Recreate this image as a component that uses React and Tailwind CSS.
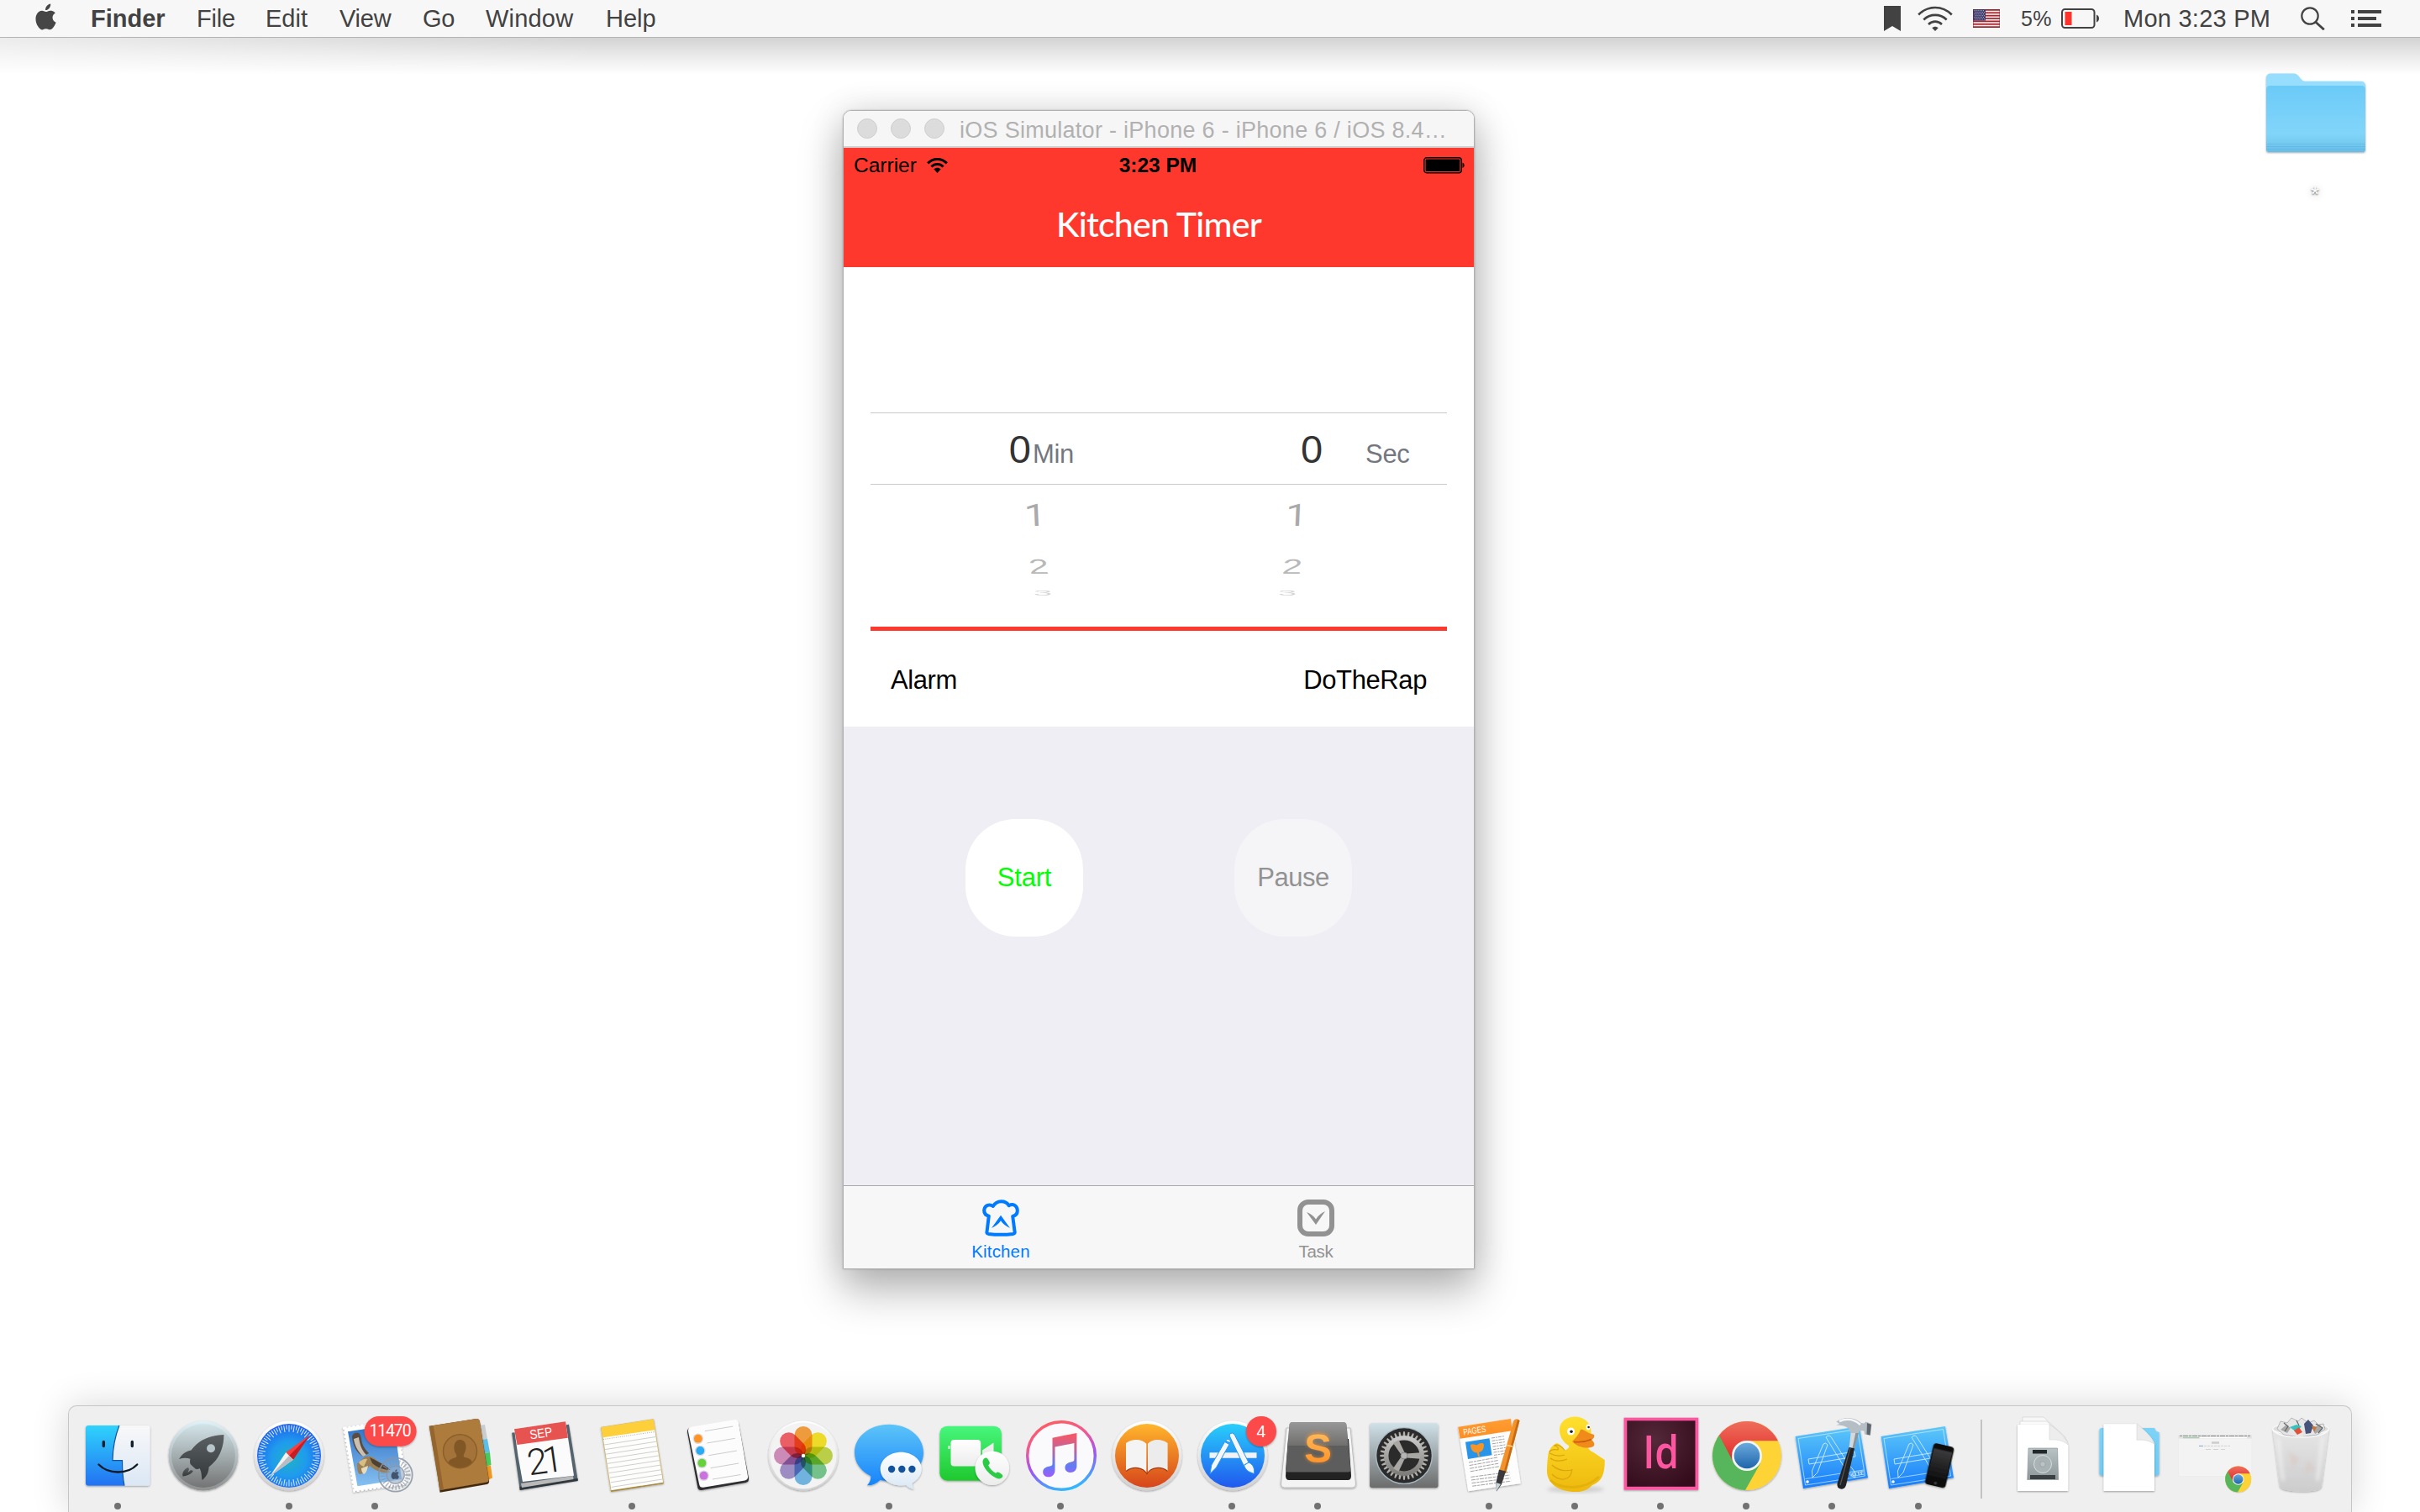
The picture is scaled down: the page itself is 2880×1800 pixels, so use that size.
import React from "react";

const SANS = "font-['Liberation_Sans',Arial,sans-serif]";

/* ---------- Menu bar ---------- */

function AppleLogo() {
  return (
    <svg className="h-[32px] w-[26px]" viewBox="0 0 26 32" fill="#464646">
      <path d="M18.2 0.6c.2 2.100-.6 4-1.700 5.300-1.200 1.400-2.900 2.300-4.500 2.100-.2-2 .7-3.900 1.800-5.100C15 1.600 16.800.7 18.200.6z" />
      <path d="M23.800 11.400c-2 1.200-3.300 3-3.300 5.400 0 2.800 1.700 5 4.100 5.900-.6 1.800-1.400 3.400-2.500 5-1.300 1.900-2.700 3.600-4.700 3.600-1.900 0-2.500-1.100-4.700-1.100s-2.900 1.100-4.700 1.200c-1.900.1-3.400-1.900-4.700-3.800C.6 23.900-.8 17.100 2 12.500c1.300-2.200 3.600-3.600 6-3.700 1.900 0 3.600 1.300 4.800 1.300 1.100 0 3.200-1.600 5.500-1.300 1 0 3.800.4 5.500 2.600z" />
    </svg>
  );
}

function Wifi({ className, stroke, color }) {
  return (
    <svg className={className} viewBox="0 0 42 30" fill="none" stroke={color} strokeWidth={stroke}>
      <path d="M1.200 10.500C12.500-.8 29.500-.8 40.800 10.500" />
      <path d="M7.300 16.500C15 9 27 9 34.700 16.500" />
      <path d="M13 22c4.800-4.500 11.200-4.500 16 0" />
      <path d="M17.300 26.300c2.200-2 5.200-2 7.400 0L21 30z" fill={color} stroke="none" />
    </svg>
  );
}

function StatusWifi() {
  return (
    <svg className="ml-[12px] h-[18px] w-[25px]" viewBox="0 0 25 18" fill="none" stroke="#000" strokeWidth="3">
      <path d="M1.200 6.300C7.700 0 17.300 0 23.800 6.300" />
      <path d="M5.400 10.500c4-3.900 10.200-3.900 14.200 0" />
      <path d="M8.300 13.300c2.400-2.200 6-2.200 8.400 0L12.500 18z" fill="#000" stroke="none" />
    </svg>
  );
}

function Flag() {
  return (
    <svg className="h-[22px] w-[32px]" viewBox="0 0 32 22">
      <rect width="32" height="22" fill="#f4f1f1" />
      {[0, 1, 2, 3, 4, 5, 6].map((i) => (
        <rect key={i} x="0" y={i * 3.38} width="32" height="1.750" fill="#a8232b" />
      ))}
      <rect width="15" height="13.600" fill="#3d3b6c" />
      {[0, 1, 2, 3, 4, 5].map((r) =>
        [0, 1, 2, 3, 4, 5].map((c) => (
          <rect key={r + "-" + c} x={1.500 + c * 2.100 + (r % 2)} y={1.300 + r * 2} width="0.900" height="0.900" fill="#dcdce8" />
        ))
      )}
      <rect x=".5" y=".5" width="31" height="21" fill="none" stroke="#7a2028" strokeOpacity=".45" />
    </svg>
  );
}

const MENUS = [
  ["Finder", "w-[126px] font-bold"],
  ["File", "w-[82px] tracking-[-0.2px]"],
  ["Edit", "w-[88px]"],
  ["View", "w-[99px] tracking-[-0.2px]"],
  ["Go", "w-[75px] tracking-[-0.4px]"],
  ["Window", "w-[143px] tracking-[0.2px]"],
  ["Help", "w-[80px]"],
];

function MenuBar() {
  return (
    <header className="relative z-10 flex h-[45px] w-full shrink-0 items-center border-b border-[#b4b4b4] bg-[#f7f7f7] text-[29px] leading-[44px] text-[#424242]">
      <div className="flex h-full w-[108px] items-center pl-[42px] pb-[5px]">
        <AppleLogo />
      </div>
      {MENUS.map(([label, cls]) => (
        <span key={label} className={cls}>{label}</span>
      ))}
      <div className="ml-auto flex h-full items-center pr-[46px]">
        <svg className="h-[30px] w-[20px]" viewBox="0 0 20 30" fill="#424242">
          <path d="M0 0h20v30l-10-6-10 6z" />
        </svg>
        <Wifi className="ml-[20px] h-[30px] w-[42px]" stroke="2.600" color="#424242" />
        <div className="ml-[24px]"><Flag /></div>
        <span className="ml-[25px] w-[48px] text-[25px] tracking-[0.4px]">5%</span>
        <svg className="h-[24px] w-[46px]" viewBox="0 0 46 24">
          <rect x="1" y="1" width="38.500" height="22" rx="3.500" fill="none" stroke="#424242" strokeWidth="2" />
          <rect x="4.500" y="4" width="8" height="16" fill="#ff322c" />
          <path d="M42 7.500c4 1.500 4 7.500 0 9z" fill="#424242" />
        </svg>
        <span className="ml-[28px] w-[211px] tracking-[0.25px]">Mon 3:23 PM</span>
        <svg className="h-[28px] w-[29px]" viewBox="0 0 29 28" fill="none" stroke="#424242">
          <circle cx="11" cy="11" r="9.700" strokeWidth="2.200" />
          <path d="M17.800 18.300l10 9" strokeWidth="2.800" />
        </svg>
        <svg className="ml-[31px] h-[20px] w-[36px]" viewBox="0 0 36 20" fill="#424242">
          <path d="M0 0h4v4H0zM0 8h4v4H0zM0 16h4v4H0zM8 0h28v4H8zM8 8h22v4H8zM8 16h28v4H8z" />
        </svg>
      </div>
    </header>
  );
}

/* ---------- Desktop folder ---------- */

function DesktopFolder() {
  return (
    <div className="absolute left-[2690px] top-[39px] flex w-[132px] flex-col items-center">
      <svg className="h-[102px] w-[132px]" viewBox="0 0 132 102">
        <defs>
          <linearGradient id="fold" x1="0" y1="0" x2="0" y2="1">
            <stop offset="0" stopColor="#6bcaf7" />
            <stop offset=".72" stopColor="#81d5fa" />
            <stop offset=".86" stopColor="#76cbf1" />
            <stop offset="1" stopColor="#66bde8" />
          </linearGradient>
          <filter id="fsh" x="-10%" y="-10%" width="120%" height="125%">
            <feDropShadow dx="0" dy="1" stdDeviation="1" floodOpacity=".35" />
          </filter>
        </defs>
        <g filter="url(#fsh)">
          <path d="M7 9q0-5.500 5.500-5.500h28q2.500 0 4.500 2.500l4 5q2 1.800 4 1.800h66.500q5.500 0 5.500 5.500v75.700q0 3-3 3H10q-3 0-3-3z" fill="#97ddfd" />
          <path d="M7 23q0-5 5-5h108q5 0 5 5v71q0 3-3 3H10q-3 0-3-3z" fill="url(#fold)" />
        </g>
        <path d="M7 87.500h118M7 90.500h118M7 93.500h118" stroke="#5ab2de" strokeOpacity=".55" strokeWidth="1" />
      </svg>
      <span className="mr-[2px] mt-[30px] text-[26px] leading-[30px] text-white [text-shadow:0_1px_2px_rgba(0,0,0,0.65),0_2px_10px_rgba(0,0,0,0.25)]">*</span>
    </div>
  );
}

/* ---------- Simulator window ---------- */

function WheelRow({ digit, rowClass, leftPad, rightPad, textClass, leftSkew, rightSkew }) {
  return (
    <div className={"flex items-center " + rowClass}>
      <div className={"w-[360px] " + leftPad}>
        <span className={"block w-[60px] text-center text-[46px] leading-none " + textClass + " " + leftSkew}>{digit}</span>
      </div>
      <div className={rightPad}>
        <span className={"block w-[60px] text-center text-[46px] leading-none " + textClass + " " + rightSkew}>{digit}</span>
      </div>
    </div>
  );
}

function Picker() {
  return (
    <section className="flex h-[547px] flex-col bg-white">
      <div className="mx-[32px] mt-[173px] h-px bg-[#c9c9c9]" />
      <div className="flex h-[84px] items-center">
        <span className="w-[223px] pt-[2px] text-right text-[47px] leading-[46px] text-[#333]">0</span>
        <span className="w-[321px] pl-[2px] pt-[13px] text-[31px] leading-[34px] tracking-[-0.3px] text-[#757780]">Min</span>
        <span className="w-[77px] pt-[2px] text-[47px] leading-[46px] text-[#333]">0</span>
        <span className="pt-[13px] text-[31px] leading-[34px] tracking-[-0.3px] text-[#757780]">Sec</span>
      </div>
      <div className="mx-[32px] h-px bg-[#c9c9c9]" />
      <WheelRow
        digit="1"
        rowClass="h-[72px]"
        leftPad="pl-[198px]"
        rightPad="pl-[149px]"
        textClass="scale-y-[0.8] text-[#aaa] font-['Roboto',sans-serif]"
        leftSkew="skew-x-[2deg]"
        rightSkew="skew-x-[-2deg]"
      />
      <WheelRow
        digit="2"
        rowClass="h-[49px]"
        leftPad="pl-[202px]"
        rightPad="pl-[144px]"
        textClass="scale-y-[0.54] scale-x-[0.93] text-[#b9b9b9]"
        leftSkew="skew-x-[4deg]"
        rightSkew="skew-x-[-4deg]"
      />
      <WheelRow
        digit="3"
        rowClass="h-[16px]"
        leftPad="pl-[207px]"
        rightPad="pl-[138px]"
        textClass="scale-y-[0.19] scale-x-[0.88] text-[#d6d6d6]"
        leftSkew=""
        rightSkew=""
      />
      <div className="mx-[32px] mt-[32px] h-[5px] bg-[#ff382d]" />
      <div className="flex flex-1 items-center justify-between pl-[56px] pr-[56px] pt-[5px] text-[31px] tracking-[-0.4px] text-black">
        <span>Alarm</span>
        <span>DoTheRap</span>
      </div>
    </section>
  );
}

function TabBar() {
  return (
    <footer className="grid h-[99px] grid-cols-2 border-t border-[#a9a9ab] bg-[#f7f7f7] text-[20.5px] leading-[22px]">
      <div className="flex flex-col items-center pr-[1px] pt-[16px] text-[#007aff]">
        <svg className="h-[44px] w-[44px]" viewBox="0 0 44 44" fill="none">
          <path
            d="M5.500 38.500q-.5 2 1.800 2.400 14.500 1.800 29.500 0 2.200-.4 1.800-2.400L36.200 20c4-1 6-4 5.500-8-.6-5-5.200-7.500-10-4.800C29.500 3.500 26.500 2.300 22.500 2.300S15 4.500 12.800 8C8.500 4.800 3.200 7 2.300 12c-.5 4 1.500 6.600 5.500 7.600z"
            stroke="#007aff"
            strokeWidth="4"
            strokeLinejoin="round"
          />
          <path d="M22 18.800l11 15.200c-4.500-1.800-8.500-5-11-8.700-2.500 3.700-6.500 6.900-11 8.700z" fill="#007aff" />
        </svg>
        <span className="mt-[7px] tracking-[0.15px]">Kitchen</span>
      </div>
      <div className="flex flex-col items-center pr-[1px] pt-[16px] text-[#929292]">
        <svg className="h-[44px] w-[44px]" viewBox="0 0 44 44" fill="none">
          <rect x="3" y="3" width="38" height="38" rx="10" stroke="#929292" strokeWidth="6" />
          <path d="M22 30L11 15c4.500 1.800 8.500 4.800 11 8.500C24.500 19.500 28.500 16 33 14z" fill="#929292" />
        </svg>
        <span className="mt-[7px] tracking-[-0.3px]">Task</span>
      </div>
    </footer>
  );
}

function SimulatorWindow() {
  return (
    <div className="absolute left-[1003px] top-[86px] flex w-[752px] flex-col rounded-t-[10px] border border-[#b0b0b0] shadow-[0_0_2px_rgba(0,0,0,0.25),0_0_40px_rgba(0,0,0,0.10),0_24px_50px_2px_rgba(0,0,0,0.28)]">
      <div className="flex h-[44px] items-center rounded-t-[9px] border-b-2 border-[#d2cfcf] bg-[#f6f6f6] pl-[16px]">
        <div className="flex gap-[16px]">
          <i className="size-[24px] rounded-full border border-[#cfcfcf] bg-[#dcdcdc]" />
          <i className="size-[24px] rounded-full border border-[#cfcfcf] bg-[#dcdcdc]" />
          <i className="size-[24px] rounded-full border border-[#cfcfcf] bg-[#dcdcdc]" />
        </div>
        <span className="ml-[18px] whitespace-nowrap pt-[3px] text-[27px] leading-[30px] tracking-[0.28px] text-[#b1b1b1]">
          iOS Simulator - iPhone 6 - iPhone 6 / iOS 8.4…
        </span>
      </div>
      <div className="h-[142px] bg-[#ff382d]">
        <div className="grid h-[42px] grid-cols-3 items-center pl-[12px] pr-[11px] text-[24.5px] leading-[42px] text-black">
          <div className="flex items-center">
            <span>Carrier</span>
            <StatusWifi />
          </div>
          <span className="pr-[3px] text-center font-bold">3:23 PM</span>
          <svg className="h-[20px] w-[49px] justify-self-end" viewBox="0 0 49 20">
            <rect x=".8" y=".8" width="44.400" height="17.900" rx="3" fill="none" stroke="#000" strokeWidth="1.400" />
            <rect x="2.600" y="2.600" width="40.800" height="14.300" rx="1" fill="#000" />
            <path d="M46.500 6.500q2.200 1 2.200 3.300t-2.200 3.300z" fill="#000" />
          </svg>
        </div>
        <h1 className="pt-[22px] text-center font-['Lato',sans-serif] text-[41px] font-medium leading-[54px] tracking-[-0.7px] text-white">Kitchen Timer</h1>
      </div>
      <Picker />
      <div className="flex h-[546px] gap-[180px] bg-[#efeef4] pl-[145px] pt-[110px] text-[31px] tracking-[-0.2px]">
        <button className="h-[140px] w-[140px] rounded-[60px] bg-white text-[#00ff00]">Start</button>
        <button className="h-[140px] w-[140px] rounded-[60px] bg-[#f5f5f7] tracking-[-0.5px] text-[#929292]">Pause</button>
      </div>
      <TabBar />
    </div>
  );
}

/* ---------- Dock icons, drawn round (0,0) ---------- */

function DockDefs() {
  const grads = [
    ["gFinder", "#2fd3fc", "#2272f2"],
    ["gFinderR", "#f8f8f9", "#dbe7f5"],
    ["gRocket", "#d3e5ea", "#747474"],
    ["gRim", "#dff2f8", "#8d8f90"],
    ["gDark", "#5b6063", "#34383b"],
    ["gWhite", "#fff", "#cfcfcf"],
    ["gSky", "#2e70c4", "#86c1f2"],
    ["gMsg", "#5cc4f8", "#1884fb"],
    ["gMsgS", "#fff", "#d9e8f5"],
    ["gGreen", "#47f67c", "#1fc82e"],
    ["gBook", "#ffb62c", "#d6441a"],
    ["gStore", "#29cffb", "#2058ee"],
    ["gPref", "#cfe1e8", "#6b6b6b"],
    ["gMetal", "#c8c8c8", "#7f7d7a"],
    ["gPages", "#ff9d33", "#fd8e23"],
    ["gDuck", "#ffe02e", "#eeb90c"],
    ["gXcode", "#5cc8f9", "#187cfa"],
    ["gDrive", "#b9c2c4", "#8d9799"],
    ["gFolder", "#7cd3f8", "#71caf2"],
    ["gTrash", "#e9e9ea", "#cdcdce"],
    ["gPhone", "#3a3a3c", "#0c0c0c"],
    ["gPaper", "#fff", "#ececec"],
    ["gOrangeS", "#ffc266", "#ff8a1d"],
    ["gBlueC", "#6aa9dc", "#1e66ab"],
    ["gChromeR", "#ef6d5c", "#df2725"],
  ];
  return (
    <svg className="absolute size-0">
      <defs>
        {grads.map(([id, a, b]) => (
          <linearGradient key={id} id={id} x1="0" y1="0" x2="0" y2="1">
            <stop offset="0" stopColor={a} />
            <stop offset="1" stopColor={b} />
          </linearGradient>
        ))}
        <linearGradient id="gTunes" x1=".3" y1="0" x2=".6" y2="1">
          <stop offset="0" stopColor="#ff5b62" />
          <stop offset=".3" stopColor="#ef5a94" />
          <stop offset=".6" stopColor="#a052f5" />
          <stop offset="1" stopColor="#2fb9fd" />
        </linearGradient>
        <linearGradient id="gNoteD" gradientUnits="userSpaceOnUse" x1="0" y1="-27" x2="0" y2="25">
          <stop offset="0" stopColor="#ff5560" />
          <stop offset=".4" stopColor="#b9679f" />
          <stop offset=".75" stopColor="#5f7df5" />
          <stop offset="1" stopColor="#a05bfb" />
        </linearGradient>
        <radialGradient id="gSafari" cx=".5" cy=".55" r=".55">
          <stop offset="0" stopColor="#1fb2c4" />
          <stop offset=".5" stopColor="#1f9bee" />
          <stop offset="1" stopColor="#1f62ec" />
        </radialGradient>
        <radialGradient id="gId" cx=".4" cy=".3" r=".8">
          <stop offset="0" stopColor="#54293a" />
          <stop offset="1" stopColor="#330b1a" />
        </radialGradient>
        <filter id="sh" x="-20%" y="-20%" width="140%" height="140%">
          <feDropShadow dx="0" dy="1" stdDeviation="1" floodOpacity=".35" />
        </filter>
        <filter id="soft" x="-20%" y="-20%" width="140%" height="140%">
          <feGaussianBlur stdDeviation="2.200" />
        </filter>
      </defs>
    </svg>
  );
}

const Finder = () => (
  <g>
    <g filter="url(#sh)">
      <rect x="-38" y="-36" width="76.500" height="71.700" rx="3" fill="url(#gFinderR)" />
    </g>
    <path d="M-35-36H1.900C-3.500-22-5.800-10-6 5.700H5.500C5.500 16 6 26 8 35.700H-35q-3 0-3-3V-33q0-3 3-3z" fill="url(#gFinder)" />
    <path d="M1.900-36C-3.500-22-5.800-10-6 5.700H5.500C5.500 16 6 26 8 35.700" fill="none" stroke="#14539c" strokeWidth="1.200" />
    <path d="M-16.700-16.500v5M17.300-16.500v5" stroke="#12212f" strokeWidth="3.400" strokeLinecap="round" />
    <path d="M-22.500 10.500C-11 22.500 12 22.500 23.200 10.500" fill="none" stroke="#101a24" strokeWidth="2.400" strokeLinecap="round" />
  </g>
);

const Launchpad = () => (
  <g>
    <circle r="41.500" fill="url(#gRim)" filter="url(#sh)" />
    <circle r="38" fill="url(#gRocket)" />
    <path
      d="M24.400-25C10-24-4-21-14.500-6.500-20.500-6-26-1-29 4c5-1.500 9.500-1.500 13.400-.3-.6 3-.4 5.500.6 6.800l5.500 5c2 .8 3.500.7 5-.5C-1.700 19.500-2.500 24-1.300 29 3.500 25 6.500 20 6.500 13.500 19 4 24.500-10 24.400-25z"
      fill="url(#gDark)"
    />
    <circle cx="9" cy="-8.700" r="5" fill="#b7c5ca" />
    <path d="M-18 14c-5 2-7.500 6-6.500 10.500 5.500-.5 10-2.500 12.500-6.500l-3-1-3.500 3 1.500-4z" fill="url(#gDark)" />
  </g>
);

const Safari = () => (
  <g>
    <circle r="41.500" fill="url(#gWhite)" filter="url(#sh)" />
    <circle r="38" fill="url(#gSafari)" />
    {Array.from({ length: 72 }, (_, i) => (
      <path key={i} d={i % 2 ? "M0-36.500v5" : "M0-36.500v8"} stroke="#dcecff" strokeWidth="1" transform={`rotate(${i * 5})`} />
    ))}
    <path d="M24.900-24.700L-3.800-4 4.900 4.700z" fill="#fb3f3c" />
    <path d="M24.900-24.700L0 0l4.900 4.700z" fill="#c71d24" />
    <path d="M-23 24.700L-3.800-4 4.900 4.700z" fill="#f2f2f2" />
    <path d="M-23 24.700L0 0l4.900 4.700z" fill="#b9bdc2" />
  </g>
);

const Mail = () => (
  <g>
    <path d="M-36.500-32.700L26-42 37 33-24.200 42z" fill="#fff" stroke="#fff" strokeWidth="3" strokeDasharray="3 2" filter="url(#sh)" />
    <path d="M-32-28.700L23-37 32 28-20.600 36.300z" fill="url(#gSky)" />
    <path d="M-27-22c0-4 4-6 8-5 3 3 3 8 4 12 1 4 5 9 8 12l-7 4c-8-5-12-13-13-23z" fill="#5a4c3e" />
    <path d="M-25-20c1 8 5 15 11 21l4-2c-6-6-8-13-9-21z" fill="#cabfb0" />
    <path d="M-21 9c4-1 6-7 11-8 6-1 9 1 13 5 6 3 12 7 15 14-8 1-18-2-24-8-4 5-8 10-12 10-3-2-3-8-3-13z" fill="#9c8055" />
    <path d="M-6 2c8 4 17 8 25 15-7 0-15-2-22-8z" fill="#4e4134" />
    <path d="M-19 8c3-3 7-5 10-4l-4 9c-3-1-5-3-6-5z" fill="#d8bd84" />
    <path d="M-16 15l8-3c-1 6-3 9-5 10-2-2-3-4-3-7z" fill="#e8dcc0" />
    <g fill="none" stroke="#8a94a3" strokeOpacity=".85">
      <circle cx="24.700" cy="22.700" r="20" strokeWidth="1.800" />
      <circle cx="24.700" cy="22.700" r="15" strokeWidth="6" strokeDasharray="1.500 2.200" strokeOpacity=".65" />
      <circle cx="24.700" cy="22.700" r="10.500" strokeWidth="1.500" />
    </g>
    <circle cx="24.700" cy="22.700" r="10" fill="#8fa6c2" fillOpacity=".6" />
    <g transform="translate(19.700 16) scale(.38)" fill="#42536b">
      <path d="M18.200.6c.2 2.100-.6 4-1.700 5.300-1.200 1.400-2.900 2.300-4.500 2.100-.2-2 .7-3.900 1.800-5.100C15 1.600 16.800.7 18.200.6z" />
      <path d="M23.800 11.400c-2 1.200-3.300 3-3.300 5.400 0 2.800 1.700 5 4.100 5.900-2 6-4.500 8.600-7.200 8.600-1.900 0-2.500-1.100-4.700-1.100s-2.900 1.100-4.700 1.200C-1 31-2 19 2 12.500c3-5 7-4 10.800-2.400 3-1.600 8-2.400 11 1.300z" />
    </g>
    <rect x="-12.400" y="-47" width="62" height="35.700" rx="17.800" fill="#fc4a48" filter="url(#sh)" />
    <text x="18.600" y="-22.600" textAnchor="middle" fontFamily="Roboto, sans-serif" fontSize="19.500" textLength="50" fill="#fff">11470</text>
  </g>
);

const Contacts = () => (
  <g>
    <path d="M22-36l7-1 3 17-8 1z" fill="#c9cdd0" />
    <path d="M24-19l8-1 3 16-9 1z" fill="#5bbfe6" />
    <path d="M27-3l8-1 1.500 15-7 2z" fill="#49c95b" />
    <path d="M29 13l7-1.500 2 15-7 3z" fill="#f0981f" />
    <path d="M-35-35.500L19-44q3-.3 3.800 2.500L34 30q.3 3-2.500 4L-24.400 43.700z" fill="#4c3114" />
    <path d="M-37.300-35.300L19-44q3-.3 3.800 2.500L33.500 28q.3 3-2.500 3.500L-24.400 41z" fill="#ad7b3e" filter="url(#sh)" />
    <path d="M-37.300-35.300l5-.8L-20 40.300l-4.400.9z" fill="#94652e" />
    <circle cx="-.5" cy="-5.300" r="20" fill="#a4733a" stroke="#8b5f2a" strokeWidth="1.500" />
    <path d="M-14.500 8.500c1-4.500 5-5 9-6.500 1-.6 1.200-2 .5-3.500-2-3-3-6-2.500-10 .5-5 3.500-7.500 7-7.500s6.500 2.500 7 7c.4 4-1 8-2.500 10.500-.6 1.500-.3 2.800.8 3.300 4 1.200 8 1.700 9 6-7 8.500-20 8.500-28.300.7z" fill="#825726" />
  </g>
);

const Calendar = () => (
  <g>
    <path d="M-40.900-27.300L27-37.300 37.700 29-31.200 41z" fill="#55646e" filter="url(#sh)" />
    <path d="M-31.600 37L37.500 27l.3 3-69 11z" fill="#2f383e" />
    <path d="M-30 33l62-9 .5 4-61.500 10z" fill="#b9b9b9" />
    <path d="M-38-31.700L23-40.700 33 23.700-28 31q-6-30-10-62.700z" fill="#fbfbfb" />
    <path d="M-38-31.700L23-40.700 25.900-21.300-34.500-13z" fill="#e65350" />
    <text x="0" y="0" transform="translate(-5.500 -21.500) rotate(-8.500)" textAnchor="middle" fontFamily="Liberation Sans, sans-serif" fontSize="15.500" textLength="27" lengthAdjust="spacingAndGlyphs" fill="#fff">SEP</text>
    <text x="0" y="0" transform="translate(.5 20.500) rotate(-8)" textAnchor="middle" fontFamily="Roboto, sans-serif" fontWeight="300" fontSize="43" textLength="42" fill="#222">21</text>
  </g>
);

const Notes = () => (
  <g>
    <path d="M-36.600-33.700L25.600-43.300 37.700 32.700-24.800 42.300z" fill="#fdfdfb" stroke="#c8ad5c" strokeWidth=".8" filter="url(#sh)" />
    <path d="M-36.600-33.700L25.600-43.300 27.700-30.700-34.400-21.700z" fill="#fdcf3a" />
    <path d="M-34-19.500l61.500-9" stroke="#999" strokeWidth=".8" strokeDasharray="1 1.500" />
    {[0, 1, 2, 3, 4, 5, 6, 7, 8, 9].map((i) => (
      <path key={i} d={`M${-33 + i * 0.95} ${-13 + i * 5.6}l61.500-9.500`} stroke="#cfcfcf" strokeWidth="1" />
    ))}
    <path d="M-25 41.300L37.500 31.700l.2 1.500-62.500 9.700z" fill="#a8893f" />
  </g>
);

const Reminders = () => (
  <g>
    <path d="M-32-33.500L20-42q4-.5 5 3.500L37 27q.5 4-3.500 5L-19 41q-4 .5-4.800-3.500L-36-28q-.5-4.500 4-5.500z" fill="#2e2e30" filter="url(#sh)" />
    <path d="M-31-34.500L20-43q4-.5 5 3.500L36 24.500q.5 4-3.500 5L-17 37.700q-4 .5-4.800-3.500L-35-29q-.5-4.500 4-5.500z" fill="#fcfcfc" />
    {[
      [-23.2, -20.300, "#ff9426"],
      [-20.700, -6, "#28aaf5"],
      [-18.600, 8.700, "#66d23b"],
      [-16.400, 23.700, "#c972e0"],
    ].map(([x, y, c]) => (
      <g key={c}>
        <circle cx={x} cy={y} r="6.300" fill="#dcdcdc" />
        <circle cx={x} cy={y} r="4.900" fill={c} />
        <path d={`M${x + 8} ${y - 9}l33.500-5.700`} stroke="#ccc" strokeWidth="1" />
      </g>
    ))}
    <path d="M-6 28l33.500-5.500" stroke="#ccc" strokeWidth="1" />
  </g>
);

const Photos = () => (
  <g>
    <circle r="41.500" fill="url(#gWhite)" filter="url(#sh)" />
    <circle r="39.500" fill="#f3f3f3" />
    <g className="isolate">
      <circle r="36" fill="#f3f3f3" />
      {["#f9a340", "#f9e62c", "#c3da4a", "#7acb90", "#76bbea", "#a594cc", "#d592bf", "#f6646a"].map((c, i) => (
        <rect key={c} x="-10.500" y="-35" width="21" height="35" rx="10.500" fill={c} transform={`rotate(${i * 45})`} className="mix-blend-multiply" />
      ))}
    </g>
    <circle r="2.200" fill="#fff" />
  </g>
);

const Messages = () => (
  <g>
    <path d="M0-37.300c23 0 41 14.500 41 33.500S23 30 0 30c-4 0-7-.3-10.500-1-4.500 4.500-10 6.500-15.500 6.300 3-3 4.500-7 4.300-11C-34 18-41 8-41-3.800-41-22.800-23-37.300 0-37.300z" fill="url(#gMsg)" filter="url(#sh)" />
    <path d="M14.200-4.300c13.500 0 24.500 9 24.500 20 0 7-4.500 13-11 16.800 0 3 .5 5 2 7.200-4-.5-7-2-9.500-4.700-16 2.500-30.500-6.300-30.500-19.300 0-11 11-20 24.500-20z" fill="url(#gMsgS)" filter="url(#sh)" />
    <circle cx="3.100" cy="16" r="4.200" fill="#13539d" />
    <circle cx="15.300" cy="16" r="4.200" fill="#13539d" />
    <circle cx="27.400" cy="16" r="4.200" fill="#13539d" />
  </g>
);

const FaceTime = () => (
  <g>
    <rect x="-41.700" y="-35.300" width="73.600" height="65" rx="9" fill="url(#gGreen)" filter="url(#sh)" />
    <rect x="-28.500" y="-19" width="35.700" height="31.500" rx="4" fill="url(#gPaper)" />
    <rect x="-31.500" y="-12" width="2" height="4" fill="#f3f3f3" />
    <path d="M9-6.500l13.500-9V6L9-1z" fill="#eee" />
    <circle cx="20.800" cy="14.700" r="20.300" fill="url(#gPaper)" filter="url(#sh)" />
    <path d="M11 3.500c2-1.600 3.500-1.200 4.800.8l1.700 3c.8 1.700.3 2.700-1.300 4 1.500 4 5 7.600 8.800 9.500 1.500-1.500 2.700-1.800 4.200-.8l2.800 2c1.800 1.300 1.800 2.700.2 4.300-2.500 2.200-6.500.9-11.500-2.600C13 18 6.500 8 11 3.500z" fill="#2ccb46" />
  </g>
);

const ITunes = () => (
  <g>
    <circle r="40.300" fill="#fafafc" stroke="url(#gTunes)" strokeWidth="3.400" />
    <path d="M-10.500-21.300L18.400-27V12c0 5-3 8-7.500 8-4 0-6.500-2.500-6.500-5.800 0-4 3-6 7-6.700 3-.5 4-1.200 4-3.500v-19L-7.500-10.500V17c0 5-3 8.300-7.500 8.300-4 0-6.800-2.300-6.800-5.800 0-4 3-6 7.200-6.700 3-.5 4.100-1.300 4.100-3.500z" fill="url(#gNoteD)" />
  </g>
);

const IBooks = () => (
  <g>
    <circle r="41.500" fill="url(#gWhite)" filter="url(#sh)" />
    <circle r="38" fill="url(#gBook)" />
    <path d="M-25-15c7-5.500 19-5.500 24.300.7V21C-5 13-17 12.500-25 18.500z" fill="#f4f4f4" />
    <path d="M24.600-15c-7-5.500-18.600-5.500-23.600.7V21C5.500 13 17 12.500 24.600 18.500z" fill="#ececec" />
    <path d="M-25 18.500C-17 12.500-5 13 0 21.500 5 13 17 12.500 24.600 18.500" fill="none" stroke="#a5380f" strokeWidth="1.200" />
  </g>
);

const AppStore = () => (
  <g>
    <circle r="41.500" fill="url(#gWhite)" filter="url(#sh)" />
    <circle r="38" fill="url(#gStore)" />
    <path d="M-27.500-3.700H28.500V2.700H-27.500z" fill="#f1f3f6" />
    <g stroke="#2395f5" strokeWidth="1">
      <path d="M-9.500-16.500l5.500 3L-19.500 14l-7.500 7.500 1.800-10.500z" fill="#f4f6f9" />
      <path d="M-8.500-18q1.500-2.500 4-1.200t1.500 4l-5.500-2.800z" fill="#f4f6f9" />
      <path d="M-4-24q.5-3.500 3.500-3 2 .5 3 2.500L19 8l-6 3.500z" fill="#f4f6f9" />
      <path d="M13.500 11.500L19 8c5 2 7.500 7 6.500 13.500-4.500-2-9.500-2.500-12-10z" fill="#f4f6f9" />
    </g>
    <circle cx="34" cy="-29" r="18" fill="#fc4a48" filter="url(#sh)" />
    <text x="34" y="-22.300" textAnchor="middle" fontFamily="Liberation Sans, sans-serif" fontSize="19.500" fill="#fff">4</text>
  </g>
);

const Sublime = () => (
  <g>
    <path d="M-38-33H38L44.500 34q0 4-4 4H-40.500q-4 0-4-4z" fill="#f4f4f4" stroke="#bdbdbd" strokeWidth="1" filter="url(#sh)" />
    <path d="M-36-20H36L39 24q0 5-4 5H-35q-4 0-4-5z" fill="#222" />
    <path d="M-34.600-36q0-4 4-4h60q4 0 4.200 4L38.300 16q.3 3.500-3 3.500H-36q-3.300 0-3-3.500z" fill="#5d5d5d" />
    <path d="M-34.600-36q0-4 4-4h60q4 0 4.200 4l1.500 24H-36z" fill="url(#gMetal)" opacity=".55" />
    <text x="-.5" y="8" textAnchor="middle" fontFamily="Liberation Sans, sans-serif" fontWeight="700" fontSize="50" fill="#ff9a30" opacity=".6" filter="url(#soft)">S</text>
    <text x="-.5" y="8" textAnchor="middle" fontFamily="Liberation Sans, sans-serif" fontWeight="700" fontSize="49" fill="url(#gOrangeS)">S</text>
  </g>
);

const Preferences = () => (
  <g>
    <rect x="-40.900" y="-38.700" width="81.500" height="77" rx="3" fill="url(#gPref)" filter="url(#sh)" />
    <circle r="34" fill="#a9bcc6" />
    <circle r="32.700" fill="#2b2b2b" />
    {Array.from({ length: 32 }, (_, i) => (
      <path key={i} d="M-1.500-23.500L-.9-28.700H.9L1.500-23.500z" fill="#b2b0ad" transform={`rotate(${i * 11.25})`} />
    ))}
    <circle r="21.300" fill="none" stroke="url(#gMetal)" strokeWidth="5.500" />
    {[90, 210, 330].map((a) => (
      <path key={a} d="M-2.200 0L-3.800-19.500H3.800L2.200 0z" fill="#a9a7a4" transform={`rotate(${a})`} />
    ))}
    <circle r="4" fill="#b5b5b5" stroke="#777" strokeWidth=".8" />
  </g>
);

const Pages = () => (
  <g>
    <path d="M-37.900-34.300L25-44 36.800 33-25.700 42.300z" fill="#fdfdfd" filter="url(#sh)" />
    <path d="M-37.900-34.300L25-44 26.800-29.700-35.400-20.300z" fill="url(#gPages)" />
    <text transform="translate(-31 -24.500) rotate(-8.500)" fontFamily="Liberation Sans, sans-serif" fontSize="10.500" textLength="27" lengthAdjust="spacingAndGlyphs" fill="#fff">PAGES</text>
    <path d="M-29-16.300L-.5-20.700 2.500-.7-26 4z" fill="#2794ea" />
    <path d="M-23-13c4-2 6 1 8 0 3-2 7-3 8 0 0 5-2 8-6 9l1 5-2 .5-1-5c-5 0-8-4-8-9.500z" fill="#f59527" />
    {[0, 1, 2, 3, 4, 5, 6].map((i) => (
      <path key={i} d={`M${2 + i * 0.5} ${-21 + i * 3.4}l15-2.300`} stroke="#8d8d8d" strokeWidth=".8" strokeDasharray="4 1 2 1" />
    ))}
    {[0, 1, 2, 3, 4, 5, 6, 7].map((i) => (
      <path key={i} d={`M${-25 + i * 0.6} ${8 + i * 3.6 + (i > 3 ? 3 : 0)}l${i > 3 ? 46 : 34}-6`} stroke="#8d8d8d" strokeWidth=".8" strokeDasharray="5 1 3 1" />
    ))}
    <path d="M28.500-42q3.500-3.500 7 0L19 21l-8-2.500z" fill="#f3922a" />
    <path d="M33-43l2.500 1.300L19 21l-2.500-.8z" fill="#c76a10" />
    <path d="M11 16.500l8 2L14 34l-6 8.500-.7-10z" fill="#3a3a3c" />
    <path d="M7.500 32l5.500 1.700-5.500 9z" fill="#c9d4da" />
    <path d="M20-12.500l7 1.500" stroke="#ffc271" strokeWidth="2" />
  </g>
);

const Duck = () => (
  <g>
    <ellipse cx="0" cy="40" rx="34" ry="4" fill="#bbb" filter="url(#soft)" opacity=".6" />
    <path
      d="M-19-31C-19-41-10-46.500-.5-46.500 9-46.500 18-40 18.500-30c.3 6-2 11-5 15 1 5 2 8 6 10 6 3.500 12 8 15.300 10C35 22 31 31 20 35 12 43 5 43 0 43-20 43-34 33-34 18c0-6 .5-13 1.500-20C-31-9-26-14-22-15c5 2 8 6 9 8.500C-10-8-7-9-8-12c-7-4-11-11-11-19z"
      fill="url(#gDuck)"
    />
    <path d="M-13-6.500C-17-12-22-14-25-12c4 1 5 3 4 5-6-1-9 0-10 3M-30 3c5 4 13 4 20 1M-31-3c6 3 12 4 18 2M-28 11c6 6 14 8 24 6M-28 22c8 8 22 10 24-6" fill="none" stroke="#d9a40d" strokeWidth="1.200" />
    <path d="M-30 29c12 11 40 13 58-4" fill="none" stroke="#dca80c" strokeWidth="3" opacity=".6" />
    <circle cx="-5.500" cy="-29" r="4.500" fill="#fff" />
    <circle cx="-5" cy="-28.800" r="1.800" fill="#222" />
    <ellipse cx="15" cy="-34" rx="2.400" ry="3.600" fill="#fff" />
    <circle cx="15.600" cy="-34" r="1.300" fill="#222" />
    <path d="M-4-17c4-4 8-8 10-14 4-1 7 4 16 6 1 3-1 5-3 6 4 3 4 7 2 8-8 4-20 0-25-6z" fill="#f08a1b" />
    <path d="M-2-16.500c8 1 14 0 21-3" stroke="#c75d0e" strokeWidth="1.500" fill="none" />
  </g>
);

const InDesign = () => (
  <g>
    <rect x="-44.400" y="-45.300" width="88.600" height="86" fill="#fd56a1" filter="url(#sh)" />
    <rect x="-40.700" y="-41.700" width="81.200" height="78.500" fill="url(#gId)" />
    <text x="-.3" y="15" textAnchor="middle" fontFamily="Open Sans, sans-serif" fontWeight="600" fontSize="54" textLength="43" lengthAdjust="spacingAndGlyphs" fill="#fd56a1">Id</text>
  </g>
);

const ChromeMark = () => (
  <g>
    <circle r="41" fill="#fdd335" filter="url(#sh)" />
    <path d="M-35.500-20.500A41 41 0 0 1 37-17.700H0L-15.500 9z" fill="url(#gChromeR)" />
    <path d="M-33-24.300A41 41 0 0 0-2 41L16 9-15.500 9z" fill="#57b65c" />
    <circle r="18" fill="#f4f4f4" />
    <circle r="15.300" fill="url(#gBlueC)" />
  </g>
);

const Blueprint = () => (
  <g>
    <path d="M-44.400-23L32-35 42 26.300-35 39z" fill="url(#gXcode)" filter="url(#sh)" />
    <g fill="none" stroke="#d8f0ff" strokeWidth="1" strokeOpacity=".85">
      <path d="M-41-20.500L29.500-31.500 38.500 24-32.500 35z" strokeWidth=".8" />
      <path d="M-32.500 27.500L37 17" strokeWidth=".8" />
      <path d="M-29 4l55-9 1 6-55 9z" />
      <path d="M-11-14q3-2.500 5 1L-18 20l-6 6-.5-8z" />
      <path d="M-8-22q3-3.500 6-.5L20 12l-5 3.500z" />
      <path d="M15 15.500l5-3.500q7 5 7 14-7-2-12-10.500z" />
    </g>
    <circle cx="-30" cy="31" r="1.800" fill="#fff" />
  </g>
);

const Xcode = () => (
  <g>
    <Blueprint />
    <text transform="translate(21 25) rotate(-9)" fontFamily="Liberation Sans, sans-serif" fontSize="6.500" textLength="17" fill="#d8f0ff">XCODE</text>
    <path d="M21.500-36h10.500c-1 8-3.500 16-6 27.500l-6.500-1.200C21-20 22-28 21.500-36z" fill="#d3d9dd" />
    <path d="M28.500-33h3.500c-1 8-3.500 15-6 24.500l-2.500-.5z" fill="#8c959c" />
    <path d="M19.500-10l6.500 1.200L16 35q-1.700 5.500-6.500 4.500T5.500 33z" fill="#222325" />
    <path d="M21-9.500L9 35" stroke="#55585c" strokeWidth="1.200" />
    <path d="M4.300-40.500C13-47 26-46.500 34-39l3.500.5 2-2 7 2.500-1.500 14-7-1.500-.5-4-5-.5-1.500 3H21c0-5-4-9.500-16.700-9.500l4-1.500z" fill="#b5bec4" />
    <path d="M8-41c8-3.500 17-3 25 4" stroke="#f5f8fa" strokeWidth="2.500" fill="none" />
    <path d="M41-39l5 2-1.500 12.500-4-1z" fill="#5d666d" />
  </g>
);

const Simulator = () => (
  <g>
    <Blueprint />
    <g transform="translate(25.200 11.700) rotate(13)" filter="url(#sh)">
      <rect x="-12.500" y="-25" width="25" height="50" rx="4" fill="#101011" />
      <rect x="-11" y="-18.500" width="22" height="37" fill="url(#gPhone)" />
      <circle cy="21.500" r="1.700" fill="#3b3b3b" />
    </g>
  </g>
);

const Drive = () => (
  <g>
    <path d="M-25-46H0L26-22V30H-25z" fill="#f7f7f7" stroke="#d2d2d2" strokeWidth=".7" />
    <path d="M-28-41H4L28-18V36H-28z" fill="#fafafa" stroke="#d2d2d2" strokeWidth=".7" />
    <path d="M-31-37H7C13-33 27-22 29.200-13V42H-31z" fill="#fff" filter="url(#sh)" />
    <path d="M7-37v18c8-.5 15 0 22.200 6C27-22 14-33 7-37z" fill="#ededed" stroke="#d5d5d5" strokeWidth=".6" />
    <path d="M-18-9H16.500l1.200 37.500h-37z" fill="url(#gDrive)" stroke="#858e91" strokeWidth=".6" />
    <rect x="-13" y="-7" width="17" height="4.500" fill="#23282a" />
    <circle cx="-1" cy="10" r="10.500" fill="#a9b2b5" stroke="#d6dcde" strokeWidth="1" />
    <circle cx="-1" cy="10" r="3.300" fill="#bac2c5" stroke="#8d9699" strokeWidth=".6" />
    <rect x="-16" y="23" width="30" height="5" fill="#3b4143" />
  </g>
);

const Documents = () => (
  <g>
    <path d="M-35.600-30q0-3 3-3H30l2 4 3.600 1V21q0 2.700-2.700 2.700h-65.800q-2.700 0-2.700-2.700z" fill="url(#gFolder)" filter="url(#sh)" />
    <path d="M-30.500-37.700H9C15-33 27-23 30-14V42H-30.500z" fill="#fff" filter="url(#sh)" />
    <path d="M9-37.700v19c8-.5 14 0 21 5C27-23 15-33 9-37.700z" fill="#ececec" stroke="#d5d5d5" strokeWidth=".6" />
  </g>
);

const BrowserThumb = () => (
  <g>
    <rect x="-43.400" y="-24.700" width="87.200" height="49.400" fill="#f3f3f3" stroke="#ececec" strokeWidth=".6" />
    <rect x="-43.400" y="-24.700" width="87.200" height="4.300" fill="#e2e2e2" />
    <path d="M-42-23.600h84" stroke="#8a8a8a" strokeWidth="1" strokeDasharray="3 1 6 1" />
    <path d="M-38-21.300h19" stroke="#7fc48b" strokeWidth=".8" />
    <path d="M-18-21.300h56" stroke="#fff" strokeWidth="1.200" />
    <path d="M-4-15.500h9" stroke="#ccc" strokeWidth="2.500" />
    <path d="M-19-11.600h5" stroke="#7fa6d8" strokeWidth="1" />
    <path d="M-13-11.600h32" stroke="#c9c9c9" strokeWidth=".8" strokeDasharray="3 1" />
    <path d="M-11-7.500H12" stroke="#c9c9c9" strokeWidth=".8" strokeDasharray="6 3" />
    <g transform="translate(27.700 28) scale(.378)"><ChromeMark /></g>
  </g>
);

const Trash = () => (
  <g>
    <path d="M-33.400-32L-25 36q1 6 25 6.500T25 36L33.600-32z" fill="url(#gTrash)" fillOpacity=".9" filter="url(#sh)" />
    <path d="M-27-20l6 50M26-22l-6 52" stroke="#f7f7f7" strokeWidth="4" strokeOpacity=".6" filter="url(#soft)" />
    <path d="M-15-5l14 8-8 14zM8 4l9 12-13 6z" fill="#d9c9c2" opacity=".6" filter="url(#soft)" />
    <ellipse cy="-32" rx="33.400" ry="7" fill="#dedede" stroke="#fafafa" strokeWidth="1.200" />
    <path d="M-28-32l4-9 8 2 5-6 8 4 4-4 8 6 7-3 5 5 6-1 2 6-9 7-22 3-18-3z" fill="#e6e6e6" stroke="#a9a9a9" strokeWidth=".8" />
    <path d="M-24-31l7-6 5 4-4 6zM14-33l9-4 3 6-9 5z" fill="#8d8d8d" opacity=".7" />
    <path d="M-13-34l8-3 6 2-6 7z" fill="#35c3c0" />
    <path d="M-8-30l6-4 4 6-6 3z" fill="#e0523a" />
    <path d="M4-38l5-5 6 7-3 9-6 1z" fill="#46527a" />
    <path d="M13-36l6 2-3 6z" fill="#c9763a" />
    <path d="M-20-39l5 4-4 6M18-38l8 5-5 6M-5-42l3 6" stroke="#666" strokeWidth="1.200" fill="none" />
    <path d="M-33.400-31c6 7 16 9 33.400 9s27.500-2 33.600-9" fill="none" stroke="#fafafa" strokeWidth="1.500" />
  </g>
);

const APPS = [
  ["Finder", Finder, true],
  ["Launchpad", Launchpad, false],
  ["Safari", Safari, true],
  ["Mail", Mail, true],
  ["Contacts", Contacts, false],
  ["Calendar", Calendar, false],
  ["Notes", Notes, true],
  ["Reminders", Reminders, false],
  ["Photos", Photos, false],
  ["Messages", Messages, true],
  ["FaceTime", FaceTime, false],
  ["iTunes", ITunes, true],
  ["iBooks", IBooks, false],
  ["App Store", AppStore, true],
  ["Sublime Text", Sublime, true],
  ["System Preferences", Preferences, false],
  ["Pages", Pages, true],
  ["Cyberduck", Duck, true],
  ["InDesign", InDesign, true],
  ["Chrome", ChromeMark, true],
  ["Xcode", Xcode, true],
  ["iOS Simulator", Simulator, true],
];

const STACKS = [
  ["Disk images", Drive, false],
  ["Documents", Documents, false],
  ["Browser window", BrowserThumb, false],
  ["Trash", Trash, false],
];

function DockItem({ name, Icon, running }) {
  return (
    <div className="flex h-[126px] w-[102.05px] flex-col items-center">
      <svg className="h-[115px] w-[102px] overflow-visible" viewBox="-51 -59 102 115" role="img" aria-label={name}>
        <Icon />
      </svg>
      {running && <i className="mr-[1px] size-[8px] rounded-full bg-[#717171]" />}
    </div>
  );
}

function Dock() {
  return (
    <div className="relative ml-[81px] flex h-[127px] w-[2718px] shrink-0 rounded-t-[10px] border border-b-0 border-[#c6c6c6] bg-[#efefef] pl-[7px] shadow-[0_0_44px_rgba(0,0,0,0.16)]">
      <DockDefs />
      {APPS.map(([name, Icon, running]) => (
        <DockItem key={name} name={name} Icon={Icon} running={running} />
      ))}
      <div className="ml-[23px] mr-[22px] mt-[16px] h-[94px] w-[2px] bg-[#c3c3c3]" />
      {STACKS.map(([name, Icon, running]) => (
        <DockItem key={name} name={name} Icon={Icon} running={running} />
      ))}
    </div>
  );
}

export default function App() {
  return (
    <div className={"flex h-[1800px] w-[2880px] flex-col overflow-hidden bg-white " + SANS}>
      <MenuBar />
      <main className="relative flex-1">
        <div className="h-[44px] bg-linear-to-b from-[#d3d3d3] via-[#ebebeb] to-white mask-[linear-gradient(to_right,rgba(0,0,0,0.45),black_25%)]" />
        <DesktopFolder />
        <SimulatorWindow />
      </main>
      <Dock />
    </div>
  );
}
